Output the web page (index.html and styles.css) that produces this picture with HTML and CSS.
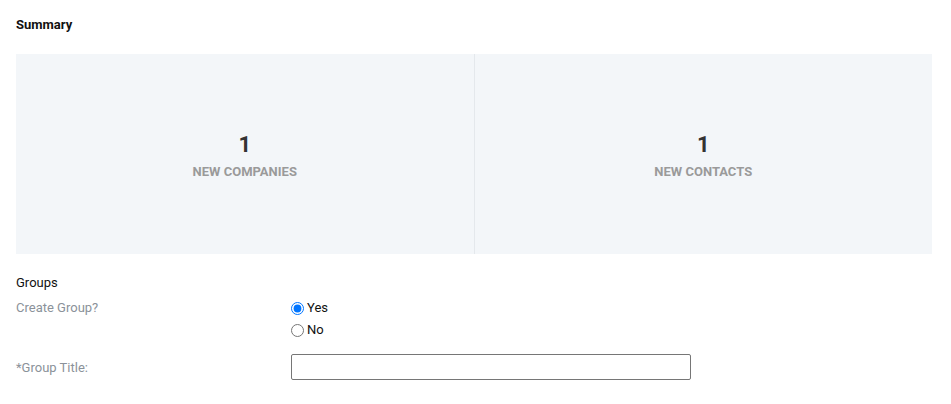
FILE: index.html
```html
<!DOCTYPE html>
<html lang="en">
<head>
    <meta charset="UTF-8">
    <title>Import Summary</title>
    <link rel="stylesheet" href="styles.css">
</head>
<body>
<div class="page">
    <h3 class="section-title">Summary</h3>

    <div class="stats">
        <div class="stat">
            <div class="stat-value">1</div>
            <div class="stat-label">New Companies</div>
        </div>
        <div class="stat">
            <div class="stat-value">1</div>
            <div class="stat-label">New Contacts</div>
        </div>
    </div>

    <div class="groups">
        <div class="groups-title">Groups</div>
        <div class="form-row">
            <label class="form-label">Create Group?</label>
            <div class="radio-list">
                <label class="radio"><input type="radio" name="createGroup" checked> Yes</label>
                <label class="radio"><input type="radio" name="createGroup"> No</label>
            </div>
        </div>
        <div class="form-row">
            <label class="form-label" for="groupTitle">*Group Title:</label>
            <input type="text" id="groupTitle" class="text-input">
        </div>
    </div>
</div>
</body>
</html>
```

FILE: styles.css
```css
body {
    margin: 0;
    font-family: Roboto, "Liberation Sans", Arial, sans-serif;
    font-size: 13px;
    color: #222;
    background-color: #fff;
}

.page {
    width: 916px;
    padding: 0 16px;
}

.section-title {
    font-size: 13px;
    font-weight: bold;
    margin: 0;
    padding-top: 17px;
    line-height: 15px;
    color: #111;
}

/* Блок с цифрами */
.stats {
    display: flex;
    margin-top: 22px;
    height: 200px;
    background-color: #f3f6f9;
}

.stat {
    flex: 1;
    display: flex;
    flex-direction: column;
    justify-content: center;
    align-items: center;
    padding-top: 4px;
}

.stat + .stat {
    border-left: 1px solid #e4e8ec;
}

.stat-value {
    font-size: 22px;
    font-weight: bold;
    line-height: 24px;
    color: #333;
}

.stat-label {
    margin-top: 7px;
    font-size: 13px;
    font-weight: bold;
    line-height: 16px;
    text-transform: uppercase;
    color: #9a9a9a;
}

.groups {
    padding-top: 21px;
}

.groups-title {
    line-height: 16px;
    color: #111;
    margin-bottom: 9px;
}

.form-row {
    display: flex;
    align-items: flex-start;
    margin-bottom: 16px;
}

.form-label {
    width: 275px;
    color: #8b929a;
    line-height: 16px;
}

.form-row:last-child .form-label {
    padding-top: 6px;
}

.radio-list {
    display: flex;
    flex-direction: column;
    gap: 6px;
}

.radio {
    display: flex;
    align-items: center;
    gap: 3px;
    line-height: 16px;
    color: #111;
}

.radio input {
    margin: 0;
    width: 13px;
    height: 13px;
}

.text-input {
    width: 400px;
    height: 26px;
    box-sizing: border-box;
    border: 1px solid #767676;
    border-radius: 2px;
    margin: 0;
}
```
